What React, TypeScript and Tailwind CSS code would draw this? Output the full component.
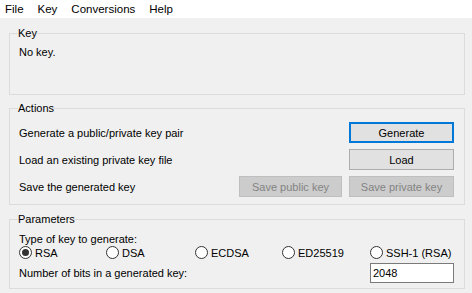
const font = "font-['Segoe_UI','Liberation_Sans',Arial,sans-serif]";

const Radio = ({ label, checked, width }: { label: string; checked?: boolean; width: string }) => (
  <label className={`flex items-center ${width}`}>
    <span className="flex h-[13px] w-[13px] items-center justify-center rounded-full border border-[#333] bg-white">
      {checked && <span className="h-[7px] w-[7px] rounded-full bg-[#333]" />}
    </span>
    <span className="ml-[3px]">{label}</span>
  </label>
);

const Button = ({ children, focused, disabled, width = "w-[105px]" }: { children: string; focused?: boolean; disabled?: boolean; width?: string }) => (
  <button
    className={`flex h-[21px] ${width} items-center justify-center ${
      focused
        ? "border-2 border-[#0078d7] bg-[#e1e1e1] text-black"
        : disabled
        ? "border border-[#bfbfbf] bg-[#cccccc] text-[#838383]"
        : "border border-[#adadad] bg-[#e1e1e1] text-black"
    }`}
  >
    {children}
  </button>
);

const App = () => {
  return (
    <div className={`h-[293px] w-[472px] overflow-hidden bg-[#f0f0f0] text-[11px] leading-[14px] text-black ${font}`}>
      <nav className="flex h-[18px] items-center bg-white pl-[5px] text-[11.5px]">
        <span className="mr-[14px]">File</span>
        <span className="mr-[14px]">Key</span>
        <span className="mr-[14px]">Conversions</span>
        <span>Help</span>
      </nav>

      <div className="flex flex-col pl-[9px] pr-[7px] pt-[8px]">
        <fieldset className="h-[69px] border border-[#dcdcdc] pl-[9px]">
          <legend className="-ml-[1px]">Key</legend>
          <div className="pt-[5px]">No key.</div>
        </fieldset>

        <fieldset className="mt-[6px] h-[104px] border border-[#dcdcdc] pl-[9px] pr-[10px]">
          <legend className="-ml-[1px]">Actions</legend>
          <div className="flex flex-col gap-[6px] pt-[7px]">
            <div className="flex items-center justify-between">
              <span>Generate a public/private key pair</span>
              <Button focused>Generate</Button>
            </div>
            <div className="flex items-center justify-between">
              <span>Load an existing private key file</span>
              <Button>Load</Button>
            </div>
            <div className="flex items-center">
              <span className="flex-1">Save the generated key</span>
              <Button disabled width="w-[103px]">Save public key</Button>
              <div className="w-[7px]" />
              <Button disabled>Save private key</Button>
            </div>
          </div>
        </fieldset>

        <fieldset className="mt-[7px] h-[77px] border border-[#dcdcdc] pl-[9px] pr-[10px]">
          <legend className="-ml-[1px]">Parameters</legend>
          <div className="pt-[6px]">Type of key to generate:</div>
          <div className="flex h-[13px] items-center">
            <Radio label="RSA" checked width="w-[87px]" />
            <Radio label="DSA" width="w-[89px]" />
            <Radio label="ECDSA" width="w-[87px]" />
            <Radio label="ED25519" width="w-[88px]" />
            <Radio label="SSH-1 (RSA)" width="flex-1" />
          </div>
          <div className="mt-[4px] flex items-center justify-between">
            <span>Number of bits in a generated key:</span>
            <div className="flex h-[20px] w-[84px] items-center border border-[#7a7a7a] bg-white pl-[2px]">2048</div>
          </div>
        </fieldset>
      </div>
    </div>
  );
};

export default App;
